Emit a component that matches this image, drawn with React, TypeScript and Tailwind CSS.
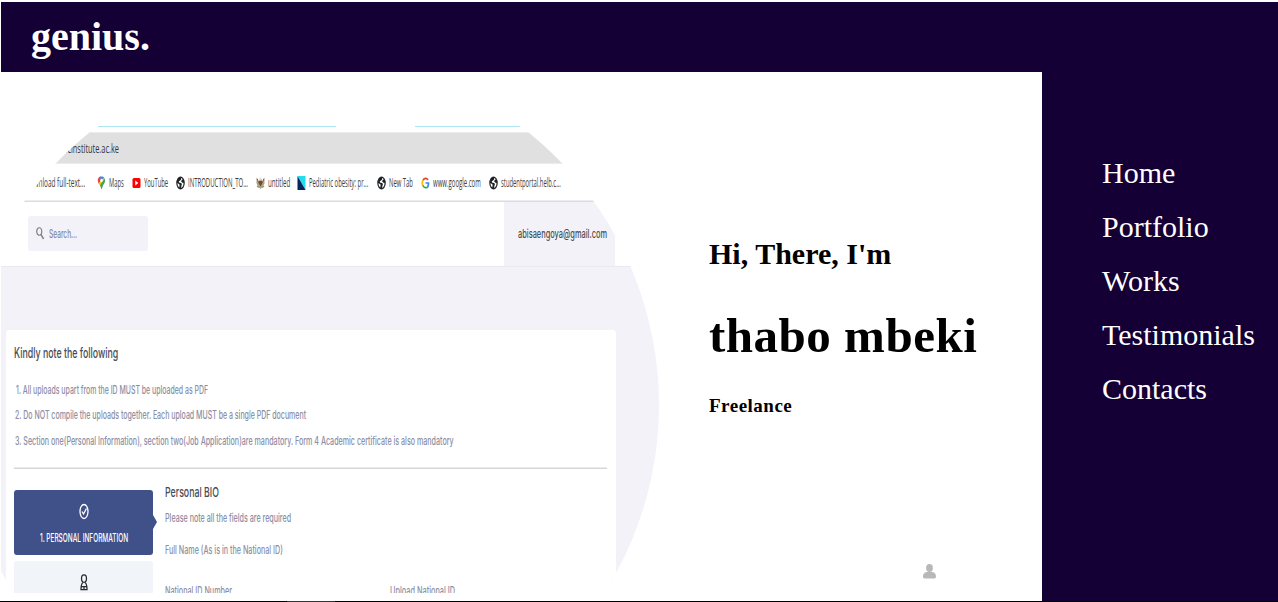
import { useLayoutEffect, useRef, useState } from 'react';
import type { ReactNode } from 'react';

/** A single line of text, compressed horizontally to a fixed width. */
function Narrow({ w, className = '', children }: { w: number; className?: string; children: ReactNode }) {
  const ref = useRef<HTMLSpanElement>(null);
  const [scale, setScale] = useState(0.65);
  useLayoutEffect(() => {
    if (ref.current) setScale(w / ref.current.offsetWidth);
  }, [w]);
  return (
    <span className={'block shrink-0 whitespace-nowrap ' + className} style={{ width: w }}>
      <span ref={ref} className="inline-block origin-left" style={{ transform: `scaleX(${scale})` }}>
        {children}
      </span>
    </span>
  );
}

const iconClass = 'h-[14px] w-[9px] shrink-0';

function MapsIcon() {
  return (
    <svg className={iconClass} viewBox="0 0 18 28" preserveAspectRatio="none">
      <path d="M2 6c1-3 3-5 5-5l2 8-5 7C2 13 1 9 2 6z" fill="#ea4335" />
      <path d="M5 2c4-2 9-1 10 3L9 10z" fill="#4285f4" />
      <path d="M3 14 13 4l2 1-8 16z" fill="#fbbc04" />
      <path d="M15 5c3 6-1 10-3 14-1 3-2 6-3 8-1-2-1-5-3-8z" fill="#34a853" />
      <ellipse cx="9" cy="9" rx="2.5" ry="3.4" fill="#fff" />
    </svg>
  );
}

function YouTubeIcon() {
  return (
    <svg className={iconClass} viewBox="0 0 18 28" preserveAspectRatio="none">
      <rect x="1" y="4" width="16" height="20" rx="3" fill="#f00" />
      <path d="M6.500 9v10l6-5z" fill="#fff" />
    </svg>
  );
}

function GlobeIcon() {
  return (
    <svg className={iconClass} viewBox="0 0 18 28" preserveAspectRatio="none">
      <ellipse cx="9" cy="14" rx="8.500" ry="13" fill="#202124" />
      <path d="M10 4c1 2 0 4-2 5-2 1-3 2-2 4l4 1c2 1 2 3 1 5l-1 5c4-2 5-6 5-10l-3-1-2-3 3-3c0-1-1-3-3-3z" fill="#fff" />
      <path d="M3 14l4 3c1 2-1 3 0 6-3-1-4-5-4-9z" fill="#fff" />
    </svg>
  );
}

function EagleIcon() {
  return (
    <svg className={iconClass} viewBox="0 0 18 28" preserveAspectRatio="none">
      <path d="M1 4l4 8 3-6h3l2 6 4-8v11l-3 6-5 5-5-5-3-6z" fill="#b5a27f" />
      <path d="M2 5l4 10M16 5l-4 10" stroke="#75604a" strokeWidth="2" />
      <path d="M6 10h6v6l-3 5-3-5z" fill="#6d4b3e" />
      <path d="M2 20l4 3M16 20l-4 3" stroke="#8a957c" strokeWidth="2.500" />
      <ellipse cx="9" cy="5" rx="2" ry="3" fill="#e8e3d5" />
    </svg>
  );
}

function JournalIcon() {
  return (
    <svg className={iconClass} viewBox="0 0 18 28" preserveAspectRatio="none">
      <path d="M1 0h16v28z" fill="#25dcec" />
      <path d="M1 0v28h16z" fill="#03265c" />
    </svg>
  );
}

function GoogleIcon() {
  return (
    <svg className={iconClass} viewBox="0 0 18 28" preserveAspectRatio="none" fill="none" strokeWidth="3.400">
      <path d="M14 8C11 3 6 4 4 9" stroke="#ea4335" />
      <path d="M4 8c-2 4-2 8 0 12" stroke="#fbbc04" />
      <path d="M4 19c2 5 7 6 10 2" stroke="#34a853" />
      <path d="M9 14h6c0 3 0 6-2 8" stroke="#4285f4" />
    </svg>
  );
}

const bookmarks = [
  { icon: <MapsIcon />, label: 'Maps', w: 15, gap: 'ml-[12px]' },
  { icon: <YouTubeIcon />, label: 'YouTube', w: 24, gap: 'ml-[8px]' },
  { icon: <GlobeIcon />, label: 'INTRODUCTION_TO...', w: 60, gap: 'ml-[8px]' },
  { icon: <EagleIcon />, label: 'untitled', w: 22, gap: 'ml-[8px]' },
  { icon: <JournalIcon />, label: 'Pediatric obesity: pr...', w: 59, gap: 'ml-[7px]' },
  { icon: <GlobeIcon />, label: 'New Tab', w: 24, gap: 'ml-[9px]' },
  { icon: <GoogleIcon />, label: 'www.google.com', w: 48, gap: 'ml-[8px]' },
  { icon: <GlobeIcon />, label: 'studentportal.helb.c...', w: 60, gap: 'ml-[8px]' },
];

function Browser() {
  return (
    <>
      <div className="flex h-[6px] pl-[97px]">
        <div className="h-px w-[238px] bg-[#ace4f4]" />
        <div className="ml-[79px] h-px w-[105px] bg-[#ace4f4]" />
      </div>
      <div className="flex h-[32px] items-center border-y border-[#ebebeb] bg-[#e0e0e0] pt-[2px] pl-[60px] font-['Open_Sans',sans-serif] text-[12px] leading-[16px] font-medium text-[#35363a]">
        <Narrow w={58}>picinstitute.ac.ke</Narrow>
      </div>
      <div className="flex h-[36px] items-center pt-px pl-[24px] font-['Open_Sans',sans-serif] text-[12px] leading-[16px] font-medium text-[#3c4043]">
        <Narrow w={60}>Download full-text...</Narrow>
        {bookmarks.map((b) => (
          <div key={b.label} className={`flex shrink-0 items-center gap-[3px] ${b.gap}`}>
            {b.icon}
            <Narrow w={b.w}>{b.label}</Narrow>
          </div>
        ))}
      </div>
      <div className="h-[2px] border-b border-[#dadce0] bg-[#ededed]" />
    </>
  );
}

function SearchBar() {
  return (
    <div className="flex h-[64px] w-[614px] items-stretch justify-between bg-white font-['Inter',sans-serif]">
      <div className="ml-[27px] mt-[14px] flex h-[35px] w-[120px] items-center rounded-[3px] bg-[#f3f2f9] pl-[8px]">
        <svg className="h-[13px] w-[8px]" viewBox="0 0 16 26" preserveAspectRatio="none" fill="none" stroke="#7b7d87" strokeWidth="2.400">
          <ellipse cx="6.500" cy="9" rx="5" ry="7.500" />
          <path d="M10 15l5 9" strokeWidth="3" />
        </svg>
        <Narrow w={28} className="ml-[5px] text-[12px] leading-[16px] font-medium text-[#8a8c98]">Search...</Narrow>
      </div>
      <div className="flex w-[111px] items-center bg-[#f3f2f9] pl-[14px] text-[12px] leading-[16px] font-medium text-[#495057]">
        <Narrow w={89}>abisaengoya@gmail.com</Narrow>
      </div>
    </div>
  );
}

function Notice() {
  return (
    <div className="ml-[5px] h-[263px] w-[610px] rounded-t-[4px] bg-white px-[8px] font-['Inter',sans-serif] text-[11.5px] font-medium text-[#8c8ea3]">
      <Narrow w={104} className="pt-[14px] text-[14px] leading-[18px] text-[#454b54]">Kindly note the following</Narrow>
      <ol className="ml-[1px] mt-[16px] leading-[25.3px]">
        <li className="pl-[1px]"><Narrow w={192}>1. All uploads upart from the ID MUST be uploaded as PDF</Narrow></li>
        <li><Narrow w={291}>2. Do NOT compile the uploads together. Each upload MUST be a single PDF document</Narrow></li>
        <li><Narrow w={439}>3. Section one(Personal Information), section two(Job Application)are mandatory. Form 4 Academic certificate is also mandatory</Narrow></li>
      </ol>
      <div className="mt-[13px] h-[2px] w-[593px] border-b border-[#d6d6d6] bg-[#ececec]" />
      <div className="mt-[21px] flex">
        <div className="w-[139px]">
          <div className="relative flex h-[65px] flex-col items-center rounded-[3px] bg-[#405189] pt-[13px]">
            <svg className="h-[17px] w-[10px]" viewBox="0 0 20 34" preserveAspectRatio="none" fill="none" stroke="#fff" strokeWidth="2.600">
              <ellipse cx="10" cy="17" rx="8" ry="14" />
              <path d="M6 17l3 5 6-11" />
            </svg>
            <Narrow w={88} className="mt-[10px] text-[11.5px] leading-[16px] text-white">1. PERSONAL INFORMATION</Narrow>
            <svg className="absolute top-[25px] -right-[4px] h-[14px] w-[4px]" viewBox="0 0 4 14">
              <path d="M0 0l4 7-4 7z" fill="#405189" />
            </svg>
          </div>
          <div className="mt-[6px] flex h-[40px] justify-center rounded-t-[3px] bg-[#f1f5f9] pt-[13px]">
            <svg className="h-[17px] w-[8px]" viewBox="0 0 16 34" preserveAspectRatio="none" fill="none" stroke="#24292f" strokeWidth="2.500">
              <ellipse cx="8" cy="9" rx="5" ry="7.500" />
              <path d="M6 17c-3 2-4 6-4 14h12c0-8-1-12-4-14M2 25h12M8 25v6" />
            </svg>
          </div>
        </div>
        <div className="ml-[12px] leading-[16px]">
          <Narrow w={54} className="-mt-[7px] text-[13.5px] leading-[18px] text-[#454b54]">Personal BIO</Narrow>
          <Narrow w={126} className="mt-[9px]">Please note all the fields are required</Narrow>
          <Narrow w={118} className="mt-[16px]">Full Name (As is in the National ID)</Narrow>
          <div className="mt-[25px] flex">
            <Narrow w={67}>National ID Number</Narrow>
            <Narrow w={65} className="ml-[158px]">Upload National ID</Narrow>
          </div>
        </div>
      </div>
    </div>
  );
}

function Portrait() {
  return (
    <div className="h-[521px] w-[660px] shrink-0 overflow-hidden bg-white pt-[54px] [clip-path:circle(350px_at_308px_333px)]">
      <Browser />
      <SearchBar />
      <div className="h-[330px] border-t border-[#e9e9ef] bg-[#f3f2f9] pt-[63px]">
        <Notice />
      </div>
    </div>
  );
}

function Intro() {
  return (
    <div className="flex grow flex-col pl-[48px] font-bold text-black">
      <h2 className="mt-[165px] text-[30px] leading-[34px]">Hi, There, I'm</h2>
      <h1 className="mt-[38px] text-[49px] leading-[54px] tracking-[0.5px]">thabo mbeki</h1>
      <h3 className="mt-[32px] text-[19px] leading-[22px] tracking-[0.5px]">Freelance</h3>
      <svg className="mt-[147px] ml-[214px] h-[15px] w-[13px]" viewBox="0 0 13 15" fill="#b8b8b8">
        <ellipse cx="6.500" cy="4" rx="3.400" ry="4" />
        <path d="M0 12.500C0 9.500 2 8 4 8h5c2 0 4 1.500 4 4.500 0 1.500-1 2-2 2H2c-1 0-2-.5-2-2z" />
      </svg>
    </div>
  );
}

const links = ['Home', 'Portfolio', 'Works', 'Testimonials', 'Contacts'];

export default function App() {
  return (
    <div className="flex h-[602px] w-[1278px] flex-col overflow-hidden bg-white font-['Liberation_Serif',serif]">
      <div className="flex grow flex-col pt-[2px] pl-px">
        <header className="flex h-[70px] items-center bg-[#150035] pl-[30px]">
          <span className="text-[40px] leading-[46px] font-bold text-white">genius.</span>
        </header>
        <div className="flex h-[529px]">
          <main className="flex w-[1041px] shrink-0">
            <Portrait />
            <Intro />
          </main>
          <nav className="flex grow flex-col gap-[20px] bg-[#150035] pt-[84px] pl-[60px] text-[30px] leading-[34px] text-white">
            {links.map((l) => (
              <a key={l}>{l}</a>
            ))}
          </nav>
        </div>
      </div>
      <div className="flex h-px shrink-0 bg-black pl-[287px]">
        <div className="w-[48px] bg-[#333]" />
      </div>
    </div>
  );
}
